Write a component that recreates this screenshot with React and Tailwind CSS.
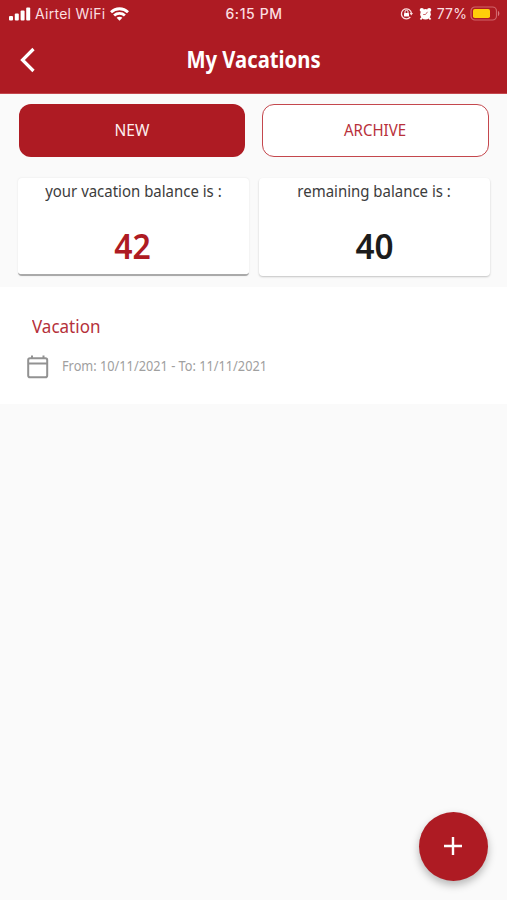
import React from "react";

function StatusBar() {
  return (
    <div className="grid h-[27px] grid-cols-3 items-center pl-[9px] pr-[7px] font-['Inter','Liberation_Sans',sans-serif] text-[14px] leading-none text-[#fbdfe0]">
      <div className="flex items-center">
        <svg width="22" height="14" viewBox="0 0 22 14" fill="#fff" className="shrink-0">
          <rect x="0" y="9" width="4" height="4.5" rx="1" />
          <rect x="5.8" y="6.5" width="4" height="7" rx="1" />
          <rect x="11.6" y="3.5" width="4" height="10" rx="1" />
          <rect x="17.2" y="0.5" width="4" height="13" rx="1" />
        </svg>
        <span className="ml-[4px] whitespace-nowrap tracking-[0.28px]">Airtel WiFi</span>
        <svg width="19" height="14" viewBox="0 0 19 14" fill="none" stroke="#fff" strokeWidth="2.8" className="ml-[5px] shrink-0">
          <path d="M1 5.2C5.7.6 13.3.6 18 5.2" />
          <path d="M4.1 8.5c3-2.8 7.8-2.8 10.8 0" />
          <path d="M9.5 13.7 6.6 10.8c1.6-1.5 4.2-1.5 5.8 0Z" fill="#fff" stroke="none" />
        </svg>
      </div>
      <div className="pr-px text-center font-medium tracking-[0.6px]">6:15 PM</div>
      <div className="flex items-center justify-end">
        <svg width="13" height="13" viewBox="0 0 13 13" className="shrink-0">
          <path d="M10.3 10A5 5 0 1 1 11.4 6.2" fill="none" stroke="#fbdfe0" strokeWidth="1.3" />
          <path d="m9.6 6 3.4 0-1.7 2.4Z" fill="#fbdfe0" />
          <rect x="4" y="5.9" width="5" height="3.6" rx=".6" fill="#fff" />
          <path d="M5 6V4.8a1.5 1.5 0 0 1 3 0V6" fill="none" stroke="#fff" />
        </svg>
        <svg width="13" height="14" viewBox="0 0 13 14" className="ml-[6px] shrink-0">
          <g fill="#fff">
            <circle cx="2.8" cy="3" r="2.1" />
            <circle cx="10.2" cy="3" r="2.1" />
            <circle cx="6.5" cy="7.2" r="5.3" />
          </g>
          <path d="m3 10.5-1.5 2M10 10.5l1.5 2" stroke="#fff" strokeWidth="1.8" />
          <path d="M8.5 4.8 6.5 7.5H4.2" fill="none" stroke="#c4555b" strokeWidth=".9" />
        </svg>
        <span className="ml-[5px] tracking-[0.1px]">77%</span>
        <svg width="30" height="15" viewBox="0 0 30 15" className="ml-[3px] shrink-0">
          <rect x="1" y="1" width="25.5" height="13" rx="4" fill="none" stroke="#d0656b" strokeWidth="1.2" />
          <rect x="3" y="3" width="17" height="9" rx="1.8" fill="#ffcf0a" />
          <path d="M28 5c1.8.6 1.8 4.4 0 5Z" fill="#d9797e" />
        </svg>
      </div>
    </div>
  );
}

function BalanceCard({ label, value, active }) {
  return (
    <div
      className={
        active
          ? "flex h-[98px] w-[231px] flex-col items-center rounded-[4px] border-b-2 border-[#aaa] bg-white shadow-[0_0_2px_rgba(0,0,0,0.1)]"
          : "flex h-[98px] w-[231px] flex-col items-center rounded-[4px] bg-white shadow-[0_1px_2px_rgba(0,0,0,0.22)]"
      }
    >
      <div className="mt-[2px] origin-center scale-x-[0.935] whitespace-nowrap text-[16px] leading-[22px] text-[#3c3c3c]">{label}</div>
      <div
        className={
          active
            ? "mr-[3px] mt-[22px] origin-center scale-x-[0.94] text-[34px] font-semibold leading-[44px] text-[#ae1b23]"
            : "mr-px mt-[22px] origin-center scale-x-[0.98] text-[34px] font-semibold leading-[44px] text-[#1c1c1c]"
        }
      >
        {value}
      </div>
    </div>
  );
}

export default function App() {
  return (
    <div className="flex h-[900px] w-[507px] flex-col overflow-hidden bg-[#fafafa] font-['Noto_Sans','Open_Sans',sans-serif]">
      <header className="h-[94px] shrink-0 border-b border-[#c4474d] bg-[#ae1b23]">
        <StatusBar />
        <div className="grid h-[66px] grid-cols-[60px_1fr_60px] items-center">
          <svg width="16" height="26" viewBox="0 0 16 26" fill="none" stroke="#fff" strokeWidth="3.2" className="ml-[20px]">
            <path d="M13.5 2 2.5 13l11 11" />
          </svg>
          <h1 className="origin-center scale-x-[0.88] whitespace-nowrap pb-[2px] text-center text-[23px] font-bold leading-[30px] text-white">My Vacations</h1>
        </div>
      </header>
      <div className="mt-[10px] flex shrink-0 gap-[17px] pl-[19px]">
        <button className="h-[53px] w-[226px] rounded-[12px] bg-[#ae1b23] pb-px text-[16px] text-[#fdeeee]">
          <span className="inline-block scale-x-[0.97]">NEW</span>
        </button>
        <button className="h-[53px] w-[227px] rounded-[12px] border-[1.5px] border-[#c4474d] bg-white pb-px text-[16px] text-[#b8303a]">
          <span className="inline-block scale-x-[0.94]">ARCHIVE</span>
        </button>
      </div>
      <div className="mt-[21px] flex shrink-0 gap-[10px] pl-[18px]">
        <BalanceCard label="your vacation balance is :" value="42" active />
        <BalanceCard label="remaining balance is :" value="40" />
      </div>
      <section className="mt-[11px] h-[117px] shrink-0 bg-white">
        <h2 className="ml-[32px] origin-left scale-x-[0.945] pt-[27px] text-[18px] leading-[24px] text-[#b5303a]">Vacation</h2>
        <div className="mt-[16px] flex h-[26px] items-center pl-[27px]">
          <svg width="22" height="24" viewBox="0 0 22 24" fill="none" stroke="#929292" strokeWidth="2" className="shrink-0">
            <rect x="1.2" y="3.2" width="19" height="19" rx="1.8" />
            <path d="M1.2 8.5h19M5 3V.5M16.5 3V.5" />
          </svg>
          <span className="mb-[4px] ml-[13px] origin-left scale-x-[0.85] whitespace-nowrap text-[15px] leading-[20px] text-[#a0a0a0]">From: 10/11/2021 - To: 11/11/2021</span>
        </div>
      </section>
      <button aria-label="Add" className="mb-[19px] ml-auto mr-[19px] mt-auto flex h-[69px] w-[69px] shrink-0 items-center justify-center rounded-full bg-[#ae1b23] shadow-[0_4px_8px_rgba(0,0,0,0.28)]">
        <svg width="18" height="18" viewBox="0 0 18 18" stroke="#fff" strokeWidth="2.4" className="mb-px mr-px">
          <path d="M9 0v18M0 9h18" />
        </svg>
      </button>
    </div>
  );
}
